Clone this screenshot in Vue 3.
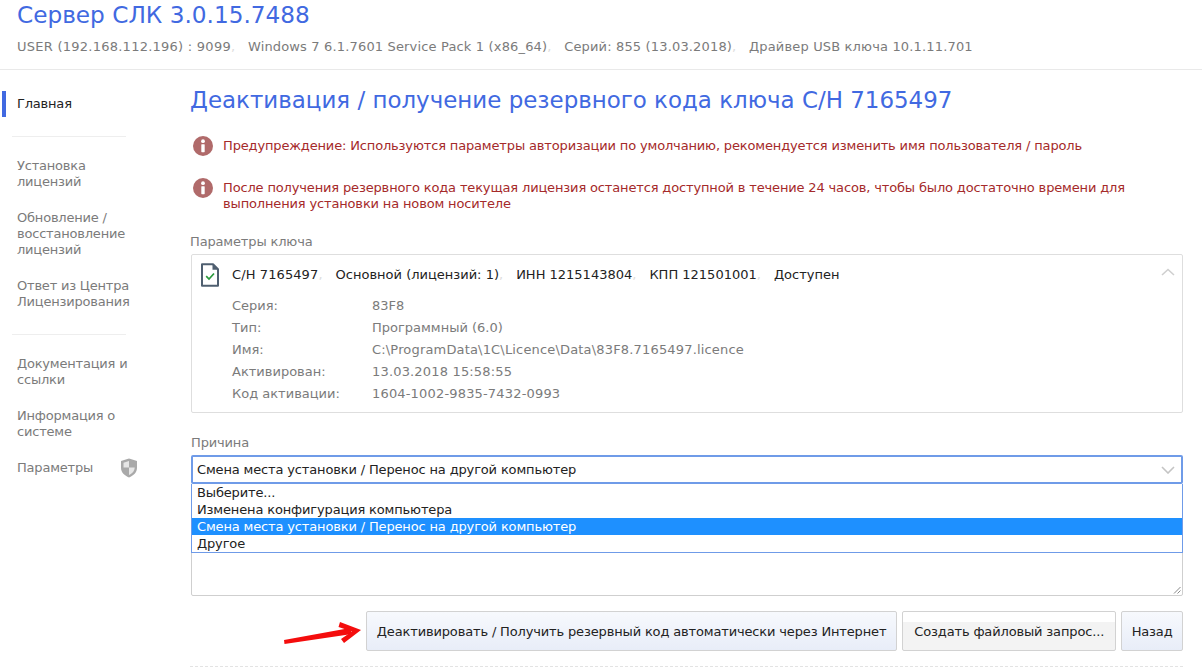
<script setup>
const rows = [
  { k: 'Серия:', v: '83F8', wide: false },
  { k: 'Тип:', v: 'Программный (6.0)', wide: false },
  { k: 'Имя:', v: 'C:\\ProgramData\\1C\\Licence\\Data\\83F8.7165497.licence', wide: true },
  { k: 'Активирован:', v: '13.03.2018 15:58:55', wide: true },
  { k: 'Код активации:', v: '1604-1002-9835-7432-0993', wide: true },
]
const headerItems = ['USER (192.168.112.196) : 9099', 'Windows 7 6.1.7601 Service Pack 1 (x86_64)', 'Серий: 855 (13.03.2018)', 'Драйвер USB ключа 10.1.11.701']
const keyItems = ['С/Н 7165497', 'Основной (лицензий: 1)', 'ИНН 1215143804', 'КПП 121501001', 'Доступен']
const options = ['Выберите...', 'Изменена конфигурация компьютера', 'Смена места установки / Перенос на другой компьютер', 'Другое']
const warnings = [
  'Предупреждение: Используются параметры авторизации по умолчанию, рекомендуется изменить имя пользователя / пароль',
  'После получения резервного кода текущая лицензия останется доступной в течение 24 часов, чтобы было достаточно времени для выполнения установки на новом носителе',
]
</script>

<template>
  <div class="page">
    <header class="header">
      <h1 class="title">Сервер СЛК 3.0.15.7488</h1>
      <div class="meta">
        <span v-for="(t, i) in headerItems" :key="t" class="meta-item">{{ t }}<i v-if="i < headerItems.length - 1" class="comma">,</i></span>
      </div>
    </header>
    <div class="body">
      <nav class="nav">
        <a class="nav-active">Главная</a>
        <hr class="nav-sep first" />
        <a class="nav-link">Установка<br />лицензий</a>
        <a class="nav-link">Обновление /<br />восстановление<br />лицензий</a>
        <a class="nav-link">Ответ из Центра<br />Лицензирования</a>
        <hr class="nav-sep" />
        <a class="nav-link">Документация и<br />ссылки</a>
        <a class="nav-link">Информация о<br />системе</a>
        <a class="nav-link params">Параметры
          <svg class="shield" width="18" height="20" viewBox="0 0 18 20">
            <path d="M9 0.5 L17 3 V10 C17 14.5 13.5 17.5 9 19.5 C4.5 17.5 1 14.5 1 10 V3 Z" fill="#a9a9a9" />
            <path d="M9 3 L3.5 4.7 V9.5 H9 Z M9 9.5 V17 C12 15.6 14.5 13.4 14.7 9.5 Z" fill="#e6e6e6" />
          </svg>
        </a>
      </nav>
      <main class="main">
        <h2 class="heading">Деактивация / получение резервного кода ключа С/Н 7165497</h2>
        <div v-for="w in warnings" :key="w" class="warning">
          <svg class="warn-icon" width="20" height="20" viewBox="0 0 20 20">
            <circle cx="10" cy="10" r="10" fill="#b06a6a" />
            <circle cx="10" cy="5.2" r="1.9" fill="#fff" />
            <rect x="8.3" y="8.2" width="3.4" height="8" rx="0.6" fill="#fff" />
          </svg>
          <p class="warn-text">{{ w }}</p>
        </div>
        <div class="label key-label">Параметры ключа</div>
        <section class="panel">
          <div class="panel-head">
            <svg class="file" width="18" height="24" viewBox="0 0 18 24">
              <path d="M1 1.2 H12 L17 6.2 V22.8 H1 Z" fill="#fff" stroke="#4f5f70" stroke-width="2" stroke-linejoin="round" />
              <path d="M11.5 1 V6.7 H17 Z" fill="#4f5f70" />
              <path d="M5.2 13.2 L8 16 L13 10.5" fill="none" stroke="#2a9a3c" stroke-width="1.7" />
            </svg>
            <div class="key-items">
              <span v-for="(t, i) in keyItems" :key="t" class="key-item">{{ t }}<i v-if="i < keyItems.length - 1" class="comma">,</i></span>
            </div>
            <svg class="chev up" width="14" height="8" viewBox="0 0 14 8">
              <path d="M1 7 L7 1.5 L13 7" fill="none" stroke="#cfcfcf" stroke-width="1.6" />
            </svg>
          </div>
          <dl class="details">
            <div v-for="r in rows" :key="r.k" class="detail">
              <dt>{{ r.k }}</dt>
              <dd :class="{ wide: r.wide }">{{ r.v }}</dd>
            </div>
          </dl>
        </section>
        <div class="label reason-label">Причина</div>
        <div class="select-wrap">
          <div class="select">
            <span>{{ options[2] }}</span>
            <svg class="chev" width="14" height="8" viewBox="0 0 14 8">
              <path d="M1 1 L7 7 L13 1" fill="none" stroke="#c4c4c4" stroke-width="1.6" />
            </svg>
          </div>
          <ul class="dropdown">
            <li v-for="(o, i) in options" :key="o" :class="{ selected: i === 2 }">{{ o }}</li>
          </ul>
          <div class="textarea">
            <svg class="grip" width="8" height="8" viewBox="0 0 8 8">
              <path d="M1 7.5 L7.5 1 M4.5 7.5 L7.5 4.5" stroke="#888" stroke-width="1" />
            </svg>
          </div>
        </div>
        <div class="actions">
          <svg class="arrow" width="84" height="30" viewBox="0 0 84 30">
            <path d="M4 24 L4.5 28 L72 18 L70 12 Z" fill="#f40d0d" />
            <path d="M60 6 L81 14 L64 27 L61 23 L72 15.5 L58.5 11 Z" fill="#f40d0d" />
          </svg>
          <button class="btn first">Деактивировать / Получить резервный код автоматически через Интернет</button>
          <button class="btn alt">Создать файловый запрос...</button>
          <button class="btn back">Назад</button>
        </div>
        <div class="dashed"></div>
      </main>
    </div>
  </div>
</template>

<style>
html, body { margin: 0; background: #fff; overflow: hidden; }
</style>

<style scoped>
.page { width: 1202px; height: 667px; overflow: hidden; font-family: "DejaVu Sans", Verdana, sans-serif; font-size: 13px; letter-spacing: -0.15px; color: #7b7b7b; background: #fff; }
.header { height: 70px; box-sizing: border-box; padding: 0 17px; border-bottom: 1px solid #e9e9e9; }
.title { margin: 0; font-size: 23.2px; line-height: 30px; font-weight: 400; letter-spacing: 0; color: #4169e1; }
.meta { margin-top: 9px; display: flex; line-height: 16px; letter-spacing: 0.16px; }
.meta-item { margin-right: 6px; white-space: nowrap; }
.meta-item:first-child { letter-spacing: 0.25px; }
.comma { font-style: normal; color: #ddd; margin-right: 6.6px; }
.body { display: flex; }
.nav { width: 190px; flex: none; padding-top: 21px; box-sizing: border-box; position: relative; }
.nav a { display: block; line-height: 16px; letter-spacing: -0.2px; }
.nav-active { color: #222; border-left: 4px solid #4169e1; margin-left: 2px; padding: 5px 0 5px 11px; width: 110px; }
.nav-sep { border: 0; border-top: 1px solid #eee; margin: 4px 64px 21px 12px; }
.nav-sep.first { margin-top: 19px; margin-bottom: 21px; }
.nav-link { padding: 0 40px 20px 17px; }
.params { display: flex !important; align-items: center; }
.shield { position: absolute; left: 120px; margin-top: -1px; }
.main { width: 993px; padding-top: 14px; }
.heading { margin: 0 0 22px; font-size: 22.95px; line-height: 32px; font-weight: 400; letter-spacing: 0; color: #4169e1; white-space: nowrap; }
.warning { display: flex; align-items: flex-start; padding-left: 3px; }
.warning + .warning { margin-top: 24px; }
.warn-icon { flex: none; margin-right: 10px; margin-top: -2px; }
.warn-text { margin: 0; color: #a52a2a; line-height: 16px; }
.label { line-height: 16px; }
.key-label { margin-top: 22px; margin-bottom: 4px; }
.panel { margin-left: 1px; width: 992px; height: 159px; box-sizing: border-box; border: 1px solid #dedede; border-radius: 2px; padding: 8px 7px 0 9px; }
.panel-head { display: flex; align-items: center; height: 24px; position: relative; }
.file { flex: none; margin-right: 13px; }
.key-items { display: flex; color: #222; white-space: nowrap; line-height: 16px; letter-spacing: 0; }
.key-item { margin-right: 8px; }
.key-item:first-child { letter-spacing: 0.1px; }
.key-item .comma { margin-right: 5px; }
.chev.up { position: absolute; right: 0; top: 5px; }
.details { margin: 8px 0 0 31px; }
.detail { display: flex; line-height: 22px; height: 22px; letter-spacing: 0; }
.detail dt { width: 140px; }
.detail dd { margin: 0; }
.detail dd.wide { letter-spacing: 0.17px; }
.reason-label { margin-top: 22px; margin-bottom: 4px; margin-left: 1px; }
.select-wrap { position: relative; margin-left: 1px; width: 992px; height: 141px; }
.select { height: 29px; box-sizing: border-box; border: 2px solid #6f9be8; border-radius: 2px; color: #222; padding: 0 6px 0 4px; display: flex; align-items: center; justify-content: space-between; }
.select .chev { margin-right: 0; }
.dropdown { position: absolute; z-index: 2; left: 0; top: 29px; width: 100%; box-sizing: border-box; margin: 0; padding: 0; list-style: none; background: #fff; border: 1px solid #6f9be8; border-top: 0; color: #222; }
.dropdown li { height: 17px; line-height: 17px; padding-left: 5px; }
.dropdown li.selected { background: #1e90ff; color: #fff; }
.textarea { position: absolute; left: 0; top: 29px; width: 100%; height: 112px; box-sizing: border-box; border: 1px solid #cfcfcf; border-radius: 2px; }
.grip { position: absolute; right: 1px; bottom: 1px; }
.actions { display: flex; gap: 5px; justify-content: flex-end; align-items: stretch; margin-top: 15px; height: 40px; width: 993px; position: relative; }
.arrow { position: absolute; left: 90px; top: 5px; }
.btn { height: 40px; box-sizing: border-box; border: 1px solid #d2d2d2; border-radius: 2px; background: linear-gradient(#f7f9fd, #e8edf8); color: #222; font: inherit; letter-spacing: inherit; padding: 0 10px; white-space: nowrap; }
.btn.alt { background: linear-gradient(#fff 0 10px, #f3f3f3 10px); padding: 0 11px; }
.btn.back { padding: 0 9.5px; }
.dashed { border-top: 1px dashed #e3e3e3; margin-top: 15px; width: 993px; }
</style>
